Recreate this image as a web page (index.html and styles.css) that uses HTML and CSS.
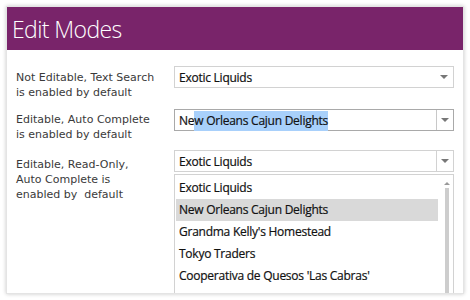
FILE: index.html
```html
<!DOCTYPE html>
<html>
<head>
<meta charset="utf-8">
<link rel="stylesheet" href="styles.css">
</head>
<body>
<div class="card">
  <div class="header"><h1 class="title">Edit Modes</h1></div>
  <div class="content">
    <div class="row row1">
      <div class="label">Not Editable, Text Search<br>is enabled by default</div>
      <div class="combo">
        <span class="value">Exotic Liquids</span>
        <span class="arrow"></span>
      </div>
    </div>
    <div class="row row2">
      <div class="label">Editable, Auto Complete<br>is enabled by default</div>
      <div class="combo combo-edit combo-focus">
        <span class="value">Ne<span class="sel">w Orleans Cajun Delights</span></span>
        <span class="btn"><span class="arrow"></span></span>
      </div>
    </div>
    <div class="row row3">
      <div class="label">Editable, Read-Only,<br>Auto Complete is<br>enabled by&nbsp; default</div>
      <div class="combo-wrap">
        <div class="combo combo-edit">
          <span class="value">Exotic Liquids</span>
          <span class="btn"><span class="arrow"></span></span>
        </div>
        <div class="list">
          <ul class="items">
            <li class="item">Exotic Liquids</li>
            <li class="item item-hover">New Orleans Cajun Delights</li>
            <li class="item">Grandma Kelly's Homestead</li>
            <li class="item">Tokyo Traders</li>
            <li class="item">Cooperativa de Quesos 'Las Cabras'</li>
          </ul>
          <div class="scrollbar">
            <span class="up"></span>
            <span class="thumb"></span>
          </div>
        </div>
      </div>
    </div>
  </div>
</div>
</body>
</html>
```
FILE: styles.css
```css
html, body {
  margin: 0;
  padding: 0;
  background: #ffffff;
}
body {
  padding: 6px;
  width: 470px;
  height: 300px;
  box-sizing: border-box;
  overflow: hidden;
}
.card {
  width: 458px;
  height: 288px;
  background: #ffffff;
  box-shadow: 0 0 4px rgba(0, 0, 0, 0.22);
  border: 1px solid #e4e4e4;
  box-sizing: border-box;
  overflow: hidden;
}
.header {
  background: #79246a;
  height: 43px;
  display: flex;
  align-items: center;
  padding-left: 5px;
}
.title {
  margin: 0;
  font-family: "Open Sans", sans-serif;
  font-weight: 300;
  font-size: 23px;
  color: #ffffff;
  letter-spacing: -0.6px;
}
.content {
  padding: 16px 9px 0 9px;
}
.row {
  display: flex;
  justify-content: space-between;
  align-items: flex-start;
}
.row1 { height: 43px; }
.row2 { height: 41px; }
.label {
  width: 150px;
  white-space: nowrap;
  font-family: "DejaVu Sans", Verdana, sans-serif;
  font-size: 11px;
  line-height: 15px;
  color: #3a3a3a;
  padding-top: 4px;
}
.row2 .label { padding-top: 3px; }
.row3 .label { padding-top: 7px; }
.combo-wrap {
  width: 280px;
}
.combo {
  width: 280px;
  height: 22px;
  border: 1px solid #d2d2d2;
  box-sizing: border-box;
  display: flex;
  align-items: center;
  justify-content: space-between;
  font-family: "Open Sans", sans-serif;
  font-size: 12px;
  color: #111111;
  background: #fff;
}
.combo-focus {
  border-color: #a9a9a9;
}
.value {
  padding-left: 4px;
  letter-spacing: -0.25px;
  -webkit-text-stroke: 0.2px #111;
}
.sel {
  background: #a8d0fb;
  padding: 1px 0 2px 0;
}
.arrow {
  width: 0;
  height: 0;
  border-left: 4px solid transparent;
  border-right: 4px solid transparent;
  border-top: 4px solid #777777;
  margin-right: 5px;
}
.btn {
  width: 16px;
  height: 100%;
  border-left: 1px solid #d2d2d2;
  display: flex;
  align-items: center;
  justify-content: center;
}
.combo-focus .btn { border-left-color: #c8c8c8; }
.btn .arrow { margin-right: 0; }
.list {
  margin-top: 2px;
  height: 130px;
  border: 1px solid #d2d2d2;
  border-bottom: none;
  box-sizing: border-box;
  display: flex;
  justify-content: space-between;
  padding: 2px 1px 0 1px;
}
.items {
  list-style: none;
  margin: 0;
  padding: 0;
  flex: 1;
  font-family: "Open Sans", sans-serif;
  font-size: 12px;
  color: #111111;
}
.item {
  height: 22px;
  line-height: 22px;
  padding-left: 3px;
  letter-spacing: -0.25px;
  -webkit-text-stroke: 0.2px #111;
  white-space: nowrap;
}
.item-hover {
  background: #d9d9d9;
}
.scrollbar {
  width: 10px;
  margin-left: 4px;
  display: flex;
  flex-direction: column;
  align-items: center;
  padding-top: 5px;
}
.up {
  width: 0;
  height: 0;
  border-left: 3px solid transparent;
  border-right: 3px solid transparent;
  border-bottom: 3px solid #999999;
}
.thumb {
  width: 4px;
  flex: 1;
  margin-top: 3px;
  background: #cdcdcd;
}
```
